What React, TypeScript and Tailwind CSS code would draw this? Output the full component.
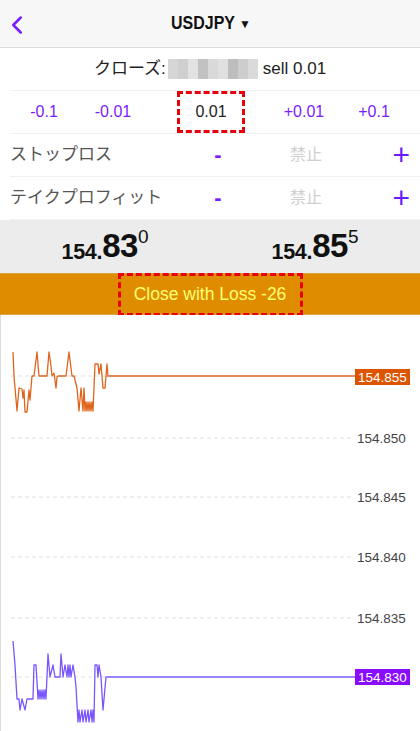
import React from "react";
import { ChevronLeft } from "lucide-react";

const FONT = { fontFamily: '"Liberation Sans", "Noto Sans CJK JP", sans-serif' };

// chart points are in chart coords (chart top = page y 315)
const ASK: [number, number][] = [
  [12, 37], [13, 61], [16, 96], [18, 73], [21, 74], [22, 83], [23, 75], [24, 97],
  [26, 97], [28, 75], [29, 85], [31, 61], [33, 61], [36, 37], [38, 61], [46, 61],
  [48, 37], [50, 51], [51, 61], [53, 58], [55, 73], [56, 62], [57, 61], [65, 61],
  [68, 37], [71, 61], [73, 61], [76, 73], [78, 96], [80, 73], [82, 96], [83, 73],
  [84, 96], [85, 87], [86, 96], [87, 87], [88, 96], [89, 87], [90, 96], [91, 87],
  [92, 96], [94, 49], [97, 49], [98, 59], [100, 49], [102, 73], [104, 73], [106, 49],
  [107, 61], [355, 61],
];

const BID: [number, number][] = [
  [12, 326], [14, 350], [16, 384], [18, 384], [19, 395], [21, 384], [24, 395],
  [26, 384], [32, 384], [33, 350], [35, 350], [37, 384], [38, 375], [39, 384],
  [40, 375], [41, 384], [42, 375], [43, 384], [44, 375], [45, 384], [47, 339],
  [49, 362], [52, 350], [54, 362], [59, 362], [60, 339], [62, 362], [64, 350],
  [66, 362], [67, 350], [68, 362], [69, 350], [70, 362], [72, 350], [74, 362],
  [75, 372], [77, 407], [78, 395], [79, 407], [81, 395], [82, 407], [84, 395],
  [85, 407], [87, 395], [88, 407], [90, 395], [91, 407], [92, 395], [93, 407],
  [94, 350], [96, 350], [97, 362], [98, 350], [100, 362], [102, 395], [105, 362],
  [355, 362],
];

const toPath = (pts: [number, number][]) =>
  pts.map(([x, y], i) => `${i === 0 ? "M" : "L"}${x} ${y}`).join(" ");

const GRID = [
  { y: 123, label: "154.850" },
  { y: 182, label: "154.845" },
  { y: 242, label: "154.840" },
  { y: 303, label: "154.835" },
];

const Chart = () => (
  <div className="flex-1 border-l border-[#dcdcdc] bg-white">
    <svg width="419" height="416" viewBox="0 0 419 416" className="block">
      <line x1="10" y1="61" x2="350" y2="61" stroke="#e2e2e2" strokeDasharray="4 3" />
      <line x1="10" y1="362" x2="350" y2="362" stroke="#e2e2e2" strokeDasharray="4 3" />
      {GRID.map((g) => (
        <g key={g.label}>
          <line x1="10" y1={g.y} x2="350" y2={g.y} stroke="#dedede" strokeDasharray="4 3" />
          <text x="356" y={g.y + 5} fontSize="13.5" fill="#444" style={FONT}>
            {g.label}
          </text>
        </g>
      ))}
      <path d={toPath(ASK)} fill="none" stroke="#e0651c" strokeWidth="1.3" strokeLinejoin="round" />
      <line x1="105" y1="61" x2="355" y2="61" stroke="#e8875c" strokeWidth="1.6" />
      <rect x="354" y="54" width="55" height="16" fill="#dc5400" />
      <text x="357" y="67" fontSize="13.5" fill="#fff" style={FONT}>
        154.855
      </text>
      <path d={toPath(BID)} fill="none" stroke="#7a55ff" strokeWidth="1.3" strokeLinejoin="round" />
      <line x1="105" y1="362" x2="355" y2="362" stroke="#9b87ff" strokeWidth="1.6" />
      <rect x="354" y="354" width="55" height="16" fill="#8a0cff" />
      <text x="357" y="367" fontSize="13.5" fill="#fff" style={FONT}>
        154.830
      </text>
    </svg>
  </div>
);

const Mosaic = () => {
  const shades = ["#d6d6d6", "#cfcfcf", "#e2e2e2", "#c2c2c2", "#d9d9d9", "#e0e0e0", "#bdbdbd", "#cdcdcd", "#dadada"];
  return (
    <span className="inline-flex h-[20px] w-[90px] mx-[2px]">
      {shades.map((c, i) => (
        <span key={i} className="flex-1" style={{ background: c }} />
      ))}
    </span>
  );
};

const AdjustRow = ({ label }: { label: string }) => (
  <div className="flex h-[43px] items-center border-b border-[#f0f0f0] ml-[10px] pr-[10px]">
    <span className="w-[196px] text-[17px] text-[#555]">{label}</span>
    <span className="w-[24px] text-center text-[22px] font-bold leading-none text-[#7a1cff]">-</span>
    <span className="w-[152px] text-center text-[16px] text-[#cfcfcf]">禁止</span>
    <span className="ml-auto text-[30px] font-light leading-none text-[#6a1cff]">+</span>
  </div>
);

const Price = ({ big, sup }: { big: string; sup: string }) => (
  <div className="flex flex-1 items-start justify-center font-bold text-[#111]">
    <span className="mt-[12px] text-[21.5px] tracking-[-0.3px]">154.</span>
    <span className="text-[33px] leading-[44px] tracking-[-0.5px]">{big}</span>
    <span className="text-[19px] font-normal leading-[26px]">{sup}</span>
  </div>
);

export default function App() {
  return (
    <div className="flex h-[731px] w-[420px] flex-col overflow-hidden bg-white" style={FONT}>
      <div className="relative flex h-[48px] shrink-0 items-center justify-center border-b border-[#dedede] bg-[#f7f7f7]">
        <ChevronLeft className="absolute left-[2px] top-[10px] text-[#7a1cff]" size={30} strokeWidth={2} />
        <span className="inline-block origin-center scale-x-[0.84] text-[19px] font-bold text-[#111]">
          USDJPY
        </span>
        <span className="mr-[4px] -ml-[2px] text-[12px] text-[#111]">▼</span>
      </div>

      <div className="flex h-[43px] shrink-0 items-center justify-center border-b border-[#f0f0f0] ml-[10px] pr-[10px] text-[17px] text-[#222]">
        <span>クローズ:</span>
        <Mosaic />
        <span className="ml-[3px]">sell 0.01</span>
      </div>

      <div className="flex h-[43px] shrink-0 items-center border-b border-[#f0f0f0] ml-[10px] text-[16px] text-[#7a1cff]">
        <span className="w-[68px] text-center">-0.1</span>
        <span className="w-[70px] text-center">-0.01</span>
        <span className="ml-[29px] flex h-[42px] w-[68px] items-center justify-center border-[3px] border-dashed border-[#e8000b] text-[#222]">
          0.01
        </span>
        <span className="ml-[24px] w-[70px] text-center">+0.01</span>
        <span className="w-[70px] text-center">+0.1</span>
      </div>

      <AdjustRow label="ストップロス" />
      <AdjustRow label="テイクプロフィット" />

      <div className="flex h-[53px] shrink-0 items-center bg-[#ebeceb]">
        <Price big="83" sup="0" />
        <Price big="85" sup="5" />
      </div>

      <div className="flex h-[42px] shrink-0 items-center justify-center border-y border-[#d4a53a] bg-[#e08c00]">
        <span className="flex h-[43px] w-[185px] items-center justify-center border-[3px] border-dashed border-[#e8000b] text-[17.5px] text-[#ffff73]">
          Close with Loss -26
        </span>
      </div>

      <Chart />
    </div>
  );
}
